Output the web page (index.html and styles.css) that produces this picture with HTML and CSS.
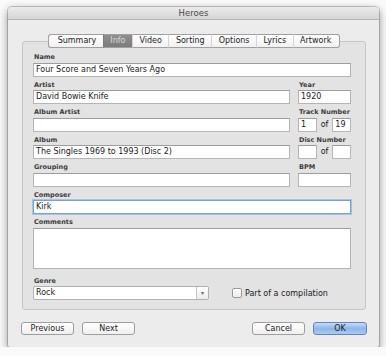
FILE: index.html
```html
<!DOCTYPE html>
<html lang="en">
<head>
    <meta charset="UTF-8">
    <meta name="viewport" content="width=device-width, initial-scale=1.0">
    <title>Heroes</title>
    <link rel="stylesheet" href="styles.css">
</head>
<body>
    <div class="window">
        <div class="titlebar">Heroes</div>
        <div class="content">
            <div class="tabs">
                <span class="tab">Summary</span>
                <span class="tab selected">Info</span>
                <span class="tab">Video</span>
                <span class="tab">Sorting</span>
                <span class="tab">Options</span>
                <span class="tab">Lyrics</span>
                <span class="tab">Artwork</span>
            </div>

            <div class="group">
                <div class="row">
                    <div class="field main">
                        <label>Name</label>
                        <div class="input">Four Score and Seven Years Ago</div>
                    </div>
                </div>
                <div class="row">
                    <div class="field main">
                        <label>Artist</label>
                        <div class="input">David Bowie Knife</div>
                    </div>
                    <div class="field side">
                        <label>Year</label>
                        <div class="input">1920</div>
                    </div>
                </div>
                <div class="row">
                    <div class="field main">
                        <label>Album Artist</label>
                        <div class="input"></div>
                    </div>
                    <div class="field side">
                        <label>Track Number</label>
                        <div class="pair">
                            <div class="input small">1</div>
                            <span class="of">of</span>
                            <div class="input small">19</div>
                        </div>
                    </div>
                </div>
                <div class="row">
                    <div class="field main">
                        <label>Album</label>
                        <div class="input">The Singles 1969 to 1993 (Disc 2)</div>
                    </div>
                    <div class="field side">
                        <label>Disc Number</label>
                        <div class="pair">
                            <div class="input small"></div>
                            <span class="of">of</span>
                            <div class="input small"></div>
                        </div>
                    </div>
                </div>
                <div class="row">
                    <div class="field main">
                        <label>Grouping</label>
                        <div class="input"></div>
                    </div>
                    <div class="field side">
                        <label>BPM</label>
                        <div class="input"></div>
                    </div>
                </div>
                <div class="row">
                    <div class="field main">
                        <label>Composer</label>
                        <div class="input focused">Kirk</div>
                    </div>
                </div>
                <div class="row">
                    <div class="field main">
                        <label>Comments</label>
                        <div class="input textarea"></div>
                    </div>
                </div>
                <div class="row genre-row">
                    <div class="field genre">
                        <label>Genre</label>
                        <div class="select">
                            <span class="select-value">Rock</span>
                            <span class="select-arrow">&#9662;</span>
                        </div>
                    </div>
                    <div class="compilation">
                        <span class="checkbox"></span>
                        <span>Part of a compilation</span>
                    </div>
                </div>
            </div>

            <div class="buttons">
                <div class="button-group">
                    <button>Previous</button>
                    <button>Next</button>
                </div>
                <div class="button-group">
                    <button>Cancel</button>
                    <button class="default">OK</button>
                </div>
            </div>
        </div>
    </div>
</body>
</html>
```

FILE: styles.css
```css
body {
    margin: 0;
    padding: 7px 0 0 8px;
    background: #fafafa;
    font-family: 'DejaVu Sans', 'Liberation Sans', sans-serif;
    color: #1a1a1a;
}
.window {
    width: 371px;
    height: 340px;
    box-sizing: border-box;
    background-color: #ececec;
    border-radius: 4px 4px 2px 2px;
    box-shadow: 0 0 0 1px rgba(0, 0, 0, 0.18), 0 3px 10px rgba(0, 0, 0, 0.45);
    overflow: hidden;
}
.titlebar {
    height: 12px;
    line-height: 13px;
    font-size: 8.5px;
    text-align: center;
    color: #4a4a4a;
    background: linear-gradient(#ebebeb, #d6d6d6);
    border-bottom: 1px solid #b4b4b4;
}
.content {
    padding: 14px 13px 0 14px;
}
.tabs {
    display: flex;
    justify-content: center;
    margin-bottom: -7px;
    position: relative;
}
.tab {
    height: 12px;
    line-height: 12px;
    font-size: 8px;
    padding: 0 6.5px;
    background: linear-gradient(#ffffff, #f1f1f1);
    border-top: 1px solid #a0a0a0;
    border-bottom: 1px solid #a0a0a0;
    border-left: 1px solid #d4d4d4;
    color: #222;
}
.tab:first-child {
    border-left: 1px solid #a0a0a0;
    border-radius: 3px 0 0 3px;
    padding-left: 9px;
}
.tab:last-child {
    border-right: 1px solid #a0a0a0;
    border-radius: 0 3px 3px 0;
    padding-right: 8px;
}
.tab.selected {
    background: linear-gradient(#8f8f8f, #7c7c7c);
    color: #d8d8d8;
    border-left-color: #7a7a7a;
}
.group {
    height: 269px;
    box-sizing: border-box;
    background-color: #e3e3e3;
    border: 1px solid #c6c6c6;
    border-radius: 3px;
    padding: 11px 14px 0 10px;
}
.row {
    display: flex;
    gap: 8px;
    margin-bottom: 4px;
}
.field.main {
    flex: 1;
}
.field.side {
    width: 53px;
}
label {
    display: block;
    height: 9.5px;
    line-height: 9px;
    font-size: 6.5px;
    font-weight: bold;
    color: #3c3c3c;
    padding-left: 1px;
}
.input {
    height: 14px;
    box-sizing: border-box;
    background-color: #fff;
    border: 1px solid #b5b5b5;
    border-top-color: #9d9d9d;
    font-size: 8px;
    line-height: 12px;
    padding-left: 2px;
    white-space: nowrap;
    overflow: hidden;
}
.input.focused {
    border-color: #7a9fd3;
    box-shadow: 0 0 0 1px #a9c3e8;
}
.input.textarea {
    height: 41px;
}
.pair {
    display: flex;
    align-items: center;
    gap: 4px;
}
.input.small {
    width: 20px;
}
.of {
    font-size: 8px;
    line-height: 12px;
}
.genre-row {
    margin-top: 8px;
    align-items: flex-end;
}
.field.genre {
    width: 176px;
}
.select {
    display: flex;
    height: 14px;
    box-sizing: border-box;
    background-color: #fff;
    border: 1px solid #b0b0b0;
    border-radius: 2px;
    font-size: 8px;
    line-height: 12px;
}
.select-value {
    flex: 1;
    padding-left: 2px;
}
.select-arrow {
    width: 11px;
    text-align: center;
    border-left: 1px solid #c4c4c4;
    font-size: 6px;
    color: #666;
    background: linear-gradient(#fdfdfd, #ececec);
}
.compilation {
    display: flex;
    align-items: center;
    gap: 3px;
    margin-left: 15px;
    height: 14px;
    font-size: 8px;
}
.checkbox {
    width: 8px;
    height: 8px;
    border: 1px solid #9a9a9a;
    border-radius: 2px;
    background: linear-gradient(#ffffff, #ececec);
}
.buttons {
    display: flex;
    justify-content: space-between;
    margin: 12px -1px 0 -1px;
}
.button-group {
    display: flex;
    gap: 8px;
}
button {
    width: 53px;
    height: 13px;
    padding: 0;
    font-family: inherit;
    font-size: 8px;
    line-height: 11px;
    color: #222;
    background: linear-gradient(#ffffff, #efefef);
    border: 1px solid #9e9e9e;
    border-radius: 3px;
}
button.default {
    width: 54px;
    background: linear-gradient(#c7dcf6, #8db6ea 50%, #a9cbf2);
    border-color: #5f86bf;
}
```
